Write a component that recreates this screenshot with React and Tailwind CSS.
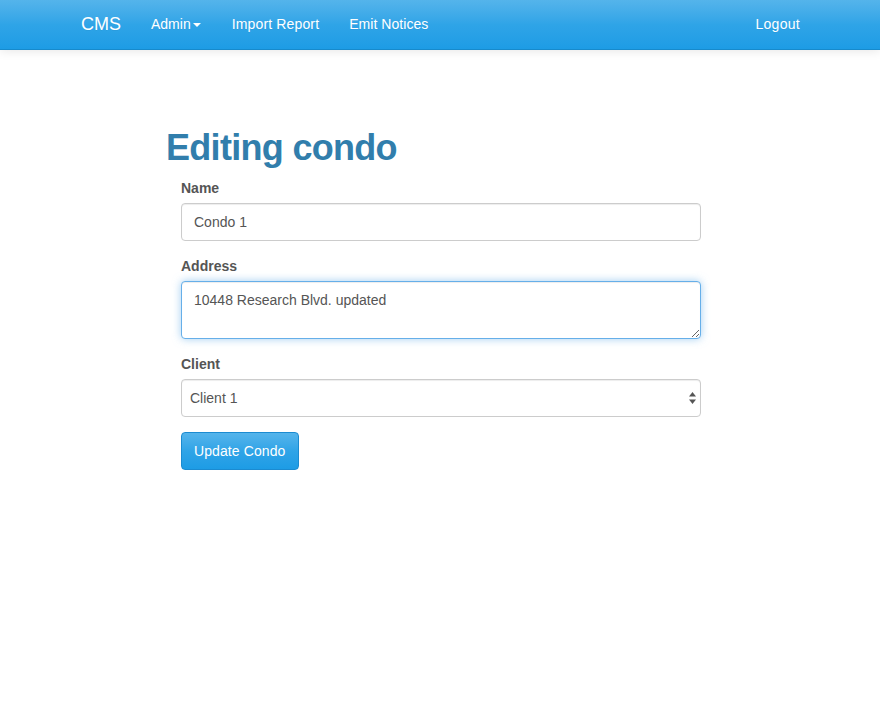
export default function App() {
  const font = { fontFamily: '"Liberation Sans", Arial, sans-serif' };
  return (
    <div className="min-h-[722px] bg-white text-[14px] text-[#555]" style={font}>
      <nav className="h-[50px] border-b border-[#178acc] bg-gradient-to-b from-[#54b4eb] via-[#2fa4e7] to-[#1d9ce5] shadow-[0_1px_10px_rgba(0,0,0,0.1)]">
        <div className="mx-auto flex h-full w-[750px] items-center px-[15px] pb-[1px] text-white [text-shadow:0_1px_0_rgba(0,0,0,0.05)]">
          <span className="ml-[1px] mr-[30px] text-[18px] leading-[20px]">CMS</span>
          <span className="flex items-center leading-[20px]">
            Admin
            <svg width="9" height="5" viewBox="0 0 9 5" className="ml-[2px] mt-[2px]">
              <path d="M0 0 L8 0 L4 4 Z" fill="white" />
            </svg>
          </span>
          <span className="ml-[30px] tracking-[0.15px] leading-[20px]">Import Report</span>
          <span className="ml-[30px] tracking-[0.05px] leading-[20px]">Emit Notices</span>
          <span className="ml-auto mr-[0px] tracking-[0.3px] leading-[20px]">Logout</span>
        </div>
      </nav>
      <div className="ml-[181px] w-[520px] pt-[78px]">
        <h1 className="-ml-[15px] mb-[10px] text-[36px] font-bold tracking-[-0.7px] leading-[40px] text-[#317eac]">Editing condo</h1>
        <div className="mb-[15px]">
          <label className="mb-[5px] block font-bold leading-[20px]">Name</label>
          <input
            readOnly
            value="Condo 1"
            className="block h-[38px] w-full rounded-[4px] border border-[#ccc] bg-white px-[12px] text-[14px] text-[#555] shadow-[inset_0_1px_1px_rgba(0,0,0,0.075)] outline-none"
            style={font}
          />
        </div>
        <div className="mb-[15px]">
          <label className="mb-[5px] block font-bold leading-[20px]">Address</label>
          <textarea
            readOnly
            value="10448 Research Blvd. updated"
            className="block h-[58px] w-full resize-y rounded-[4px] border border-[#66afe9] bg-white px-[12px] py-[8px] text-[14px] leading-[20px] text-[#555] shadow-[inset_0_1px_1px_rgba(0,0,0,0.075),0_0_8px_rgba(102,175,233,0.6)] outline-none"
            style={font}
          />
        </div>
        <div className="mb-[15px]">
          <label className="mb-[5px] block font-bold leading-[20px]">Client</label>
          <div className="relative">
            <select
              className="block h-[38px] w-full appearance-none rounded-[4px] border border-[#ccc] bg-white px-[8px] text-[14px] text-[#555] shadow-[inset_0_1px_1px_rgba(0,0,0,0.075)] outline-none"
              style={font}
              defaultValue="1"
            >
              <option value="1">Client 1</option>
            </select>
            <svg width="7" height="12" viewBox="0 0 7 12" className="pointer-events-none absolute right-[5px] top-[13px]">
              <path d="M3.5 0 L7 4.5 L0 4.5 Z" fill="#555" />
              <path d="M3.5 12 L7 7.5 L0 7.5 Z" fill="#555" />
            </svg>
          </div>
        </div>
        <button
          className="h-[38px] rounded-[4px] border border-[#1b8bd1] bg-gradient-to-b from-[#54b4eb] via-[#2fa4e7] to-[#1d9ce5] px-[12px] text-[14px] tracking-[0.1px] text-white"
          style={font}
        >
          Update Condo
        </button>
      </div>
    </div>
  );
}
